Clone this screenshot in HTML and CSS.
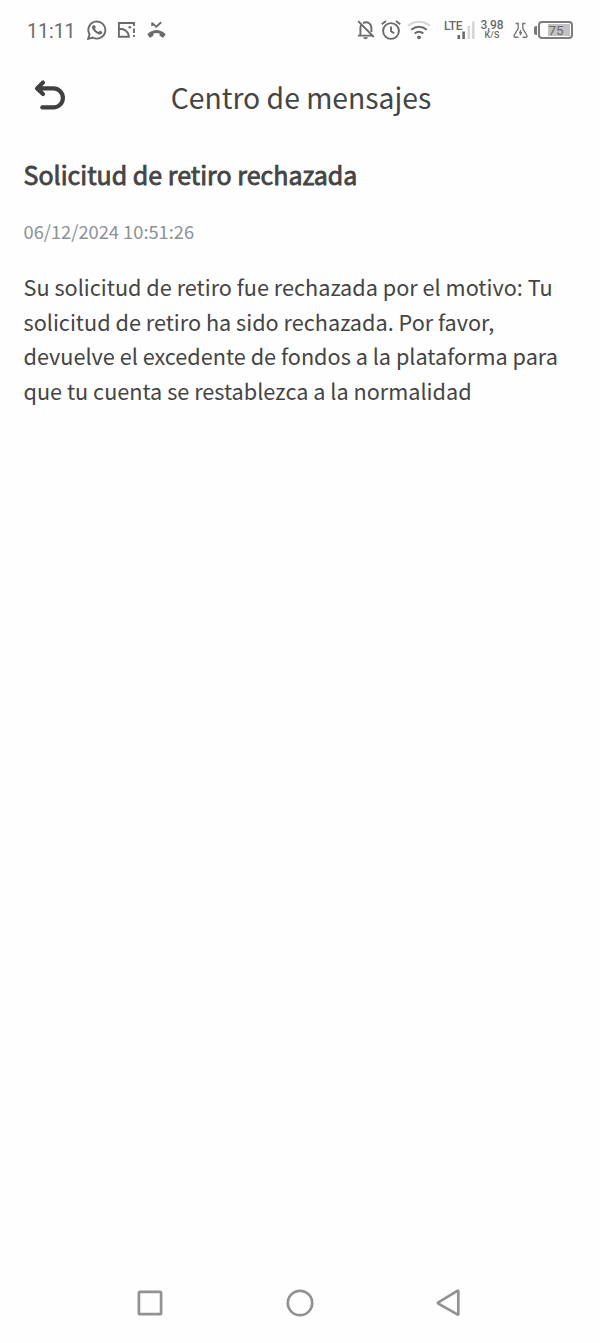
FILE: index.html
```html
<!DOCTYPE html>
<html lang="es">
<head>
    <meta charset="UTF-8">
    <meta name="viewport" content="width=device-width, initial-scale=1.0">
    <title>Centro de mensajes</title>
    <link rel="stylesheet" href="styles.css">
</head>
<body>
    <div class="status-bar">
        <div class="status-left">
            <span class="clock">11:11</span>
            <svg class="icon-whatsapp" width="20" height="20" viewBox="0 0 20 20">
                <path class="line" d="M1.2 18.8 L2.5 14.3 A8.5 8.5 0 1 1 5.8 17.5 Z"/>
                <path class="fill" d="M6.1 5.2 Q7.5 4.4 8 5.6 L8.7 7.3 Q8.8 7.9 7.9 8.8 Q9.2 11.2 11.5 12.1 L12.6 10.9 Q13 10.6 13.5 10.9 L15.2 11.8 Q15.6 12.2 15.1 13.3 Q13.8 15.2 11.2 14.3 Q7.2 12.8 5.2 8.8 Q4.3 6.7 6.1 5.2 Z"/>
            </svg>
            <svg class="icon-image" width="19" height="18" viewBox="0 0 19 18">
                <path class="line" d="M17 5 V2 H1.9 V15.8 H12.8 M2 7.8 Q10.5 7.6 12 15.6"/>
                <circle class="fill" cx="12.8" cy="6.2" r="1.3"/>
                <path class="line" d="M16.9 7.6 V12 M16.9 14 V16"/>
            </svg>
            <svg class="icon-missed" width="19" height="18" viewBox="0 0 19 18">
                <path class="line" d="M5.2 1.5 V5 M5.2 1.8 L9.2 5.8 L14.2 1.2"/>
                <path class="fill" d="M0.8 12.8 Q9.5 5.3 18.2 12.8 Q18.7 13.4 18.2 14 L16.6 16.3 Q16 16.9 15.4 16.5 L13.1 15.1 Q12.6 14.8 12.6 14.3 V12.4 Q9.5 11.7 6.4 12.4 V14.3 Q6.4 14.8 5.9 15.1 L3.6 16.5 Q3 16.9 2.4 16.3 L0.8 14 Q0.3 13.4 0.8 12.8 Z"/>
            </svg>
        </div>
        <div class="status-right">
            <svg class="icon-bell" width="18" height="20" viewBox="0 0 18 20">
                <path class="line" d="M1 15.6 H15.5 M3.4 15.5 V8 Q3.4 5.5 4.6 4.4 M6 3.2 Q9 1.2 12.2 3.2 Q14.4 5 14.4 8 V12 M1.2 1.2 L16.8 17"/>
                <path class="fill" d="M6 17.2 H11 Q10.5 19.2 8.5 19.2 Q6.5 19.2 6 17.2 Z"/>
            </svg>
            <svg class="icon-alarm" width="20" height="20" viewBox="0 0 20 20">
                <circle class="line" cx="10" cy="11" r="7.9"/>
                <path class="line" d="M10 6.5 V11.3 L13.2 13.2 M0.8 4.2 L5 1 M15 1 L19.2 4.2"/>
            </svg>
            <svg class="icon-wifi" width="24" height="20" viewBox="0 0 24 20">
                <path class="line faint" d="M1 5.7 Q12 -2.3 23 5.7"/>
                <path class="line" d="M4.2 9.8 Q12 3.8 19.8 9.8 M7.6 13.6 Q12 10 16.4 13.6"/>
                <circle class="fill" cx="12" cy="17.3" r="1.9"/>
            </svg>
            <span class="lte">LTE</span>
            <svg class="icon-signal" width="19" height="18" viewBox="0 0 19 18">
                <path class="bar" d="M2.8 14 V18 M7.6 10.5 V18"/>
                <path class="bar faint" d="M12.8 5 V18 M17.3 0.5 V18"/>
            </svg>
            <span class="speed"><span>3,98</span><span class="unit">K/S</span></span>
            <svg class="icon-flask" width="15" height="17" viewBox="0 0 15 17">
                <path class="thin" d="M2.5 1.5 H5.2 V6.5 L1.2 13.2 Q0.5 15.2 2.2 15.2 H5.5 M9.5 15.2 H12.8 Q14.5 15.2 13.8 13.2 L9.8 6.5 V1.5 H12.5 M7.8 8 L6.8 10.7 H8.3 L7.2 13.3"/>
            </svg>
            <div class="battery-tip"></div>
            <div class="battery"><div class="level">75</div></div>
        </div>
    </div>

    <div class="header">
        <svg class="back" width="34" height="34" viewBox="0 0 34 34">
            <path d="M10 3.6 L4 9.4 L10 15 M4.4 9.4 H20.4 A9.5 9.5 0 0 1 20.4 28.4 H9.3"/>
        </svg>
        <h1>Centro de mensajes</h1>
    </div>

    <div class="message">
        <h2>Solicitud de retiro rechazada</h2>
        <div class="date">06/12/2024 10:51:26</div>
        <p>Su solicitud de retiro fue rechazada por el motivo: Tu solicitud de retiro ha sido rechazada. Por favor, devuelve el excedente de fondos a la plataforma para que tu cuenta se restablezca a la normalidad</p>
    </div>

    <div class="nav-bar">
        <svg width="28" height="28" viewBox="0 0 28 28"><rect x="2.9" y="2.9" width="22.2" height="22.2" rx="1.2"/></svg>
        <svg width="28" height="28" viewBox="0 0 28 28"><circle cx="14" cy="14" r="12.2"/></svg>
        <svg width="28" height="28" viewBox="0 0 28 28"><path d="M22.3 2.3 V24.9 Q22.3 26 21.3 25.4 L2.4 14.7 Q1.4 14 2.4 13.3 L21.3 1.8 Q22.3 1.2 22.3 2.3 Z"/></svg>
    </div>
</body>
</html>
```

FILE: styles.css
```css
* {
    box-sizing: border-box;
}

body {
    margin: 0;
    height: 1343px;
    display: flex;
    flex-direction: column;
    background-color: #fefefe;
    color: #444;
    font-family: "Noto Sans CJK SC", "Noto Sans", sans-serif;
}

svg {
    display: block;
    flex-shrink: 0;
    fill: none;
}

.status-bar {
    height: 60px;
    padding: 0 27px;
    display: flex;
    justify-content: space-between;
    align-items: center;
    font-family: Roboto, sans-serif;
    color: #6a6a6a;
}

.status-left, .status-right {
    display: flex;
    align-items: center;
}

.clock {
    width: 60px;
    padding-top: 2px;
    font-size: 19.5px;
}

.line {
    stroke: #6a6a6a;
    stroke-width: 1.9;
}

.fill {
    fill: #6a6a6a;
}

.thin {
    stroke: #777;
    stroke-width: 1.4;
}

.bar {
    stroke: #6a6a6a;
    stroke-width: 2.6;
}

.faint {
    stroke: #d6d6d6;
}

.icon-image {
    margin-left: 10px;
}

.icon-missed {
    margin-left: 11px;
}

.icon-alarm {
    margin-left: 6px;
}

.icon-wifi {
    margin-left: 6px;
}

.lte {
    margin: -9px 0 0 13px;
    width: 12px;
    white-space: nowrap;
    font-size: 12px;
    font-weight: 500;
    letter-spacing: -0.3px;
}

.speed {
    margin-left: 5px;
    width: 24px;
    display: flex;
    flex-direction: column;
    align-items: center;
    font-size: 12px;
    line-height: 11px;
    font-weight: 500;
}

.unit {
    font-size: 9px;
    line-height: 9px;
    letter-spacing: 0.2px;
}

.icon-flask {
    margin-left: 9px;
}

.battery-tip {
    margin-left: 6px;
    width: 3px;
    height: 9px;
    border-radius: 2px 0 0 2px;
    background-color: #777;
}

.battery {
    margin-left: 1px;
    width: 35px;
    height: 18px;
    padding: 1px;
    border: 2px solid #7c7c7c;
    border-radius: 4px;
}

.level {
    height: 12px;
    padding-left: 1px;
    background: linear-gradient(to right, transparent 24%, #c2c2c2 24%);
    text-align: center;
    font-size: 13.5px;
    line-height: 13px;
}

.header {
    position: relative;
    height: 77px;
    padding-bottom: 3px;
    display: flex;
    justify-content: center;
    align-items: center;
}

.back {
    position: absolute;
    left: 33px;
    top: 19px;
    stroke: #404040;
    stroke-width: 4.2;
    stroke-linecap: round;
    stroke-linejoin: round;
}

h1 {
    margin: 0;
    padding-left: 2px;
    font-size: 28.3px;
    font-weight: 400;
    line-height: 40px;
}

.message {
    flex: 1;
    padding: 17px 24px 0 23.5px;
}

h2 {
    margin: 0;
    font-size: 25px;
    line-height: 40px;
    font-weight: 400;
    -webkit-text-stroke: 0.8px #444;
}

.date {
    margin-top: 22px;
    font-size: 18.3px;
    line-height: 30px;
    color: #8b9296;
}

p {
    margin: 24px 0 0;
    font-size: 21.67px;
    line-height: 34.7px;
}

.nav-bar {
    height: 80px;
    padding: 0 136px;
    display: flex;
    justify-content: space-between;
    align-items: center;
    stroke: #929292;
    stroke-width: 2.7;
}
```
